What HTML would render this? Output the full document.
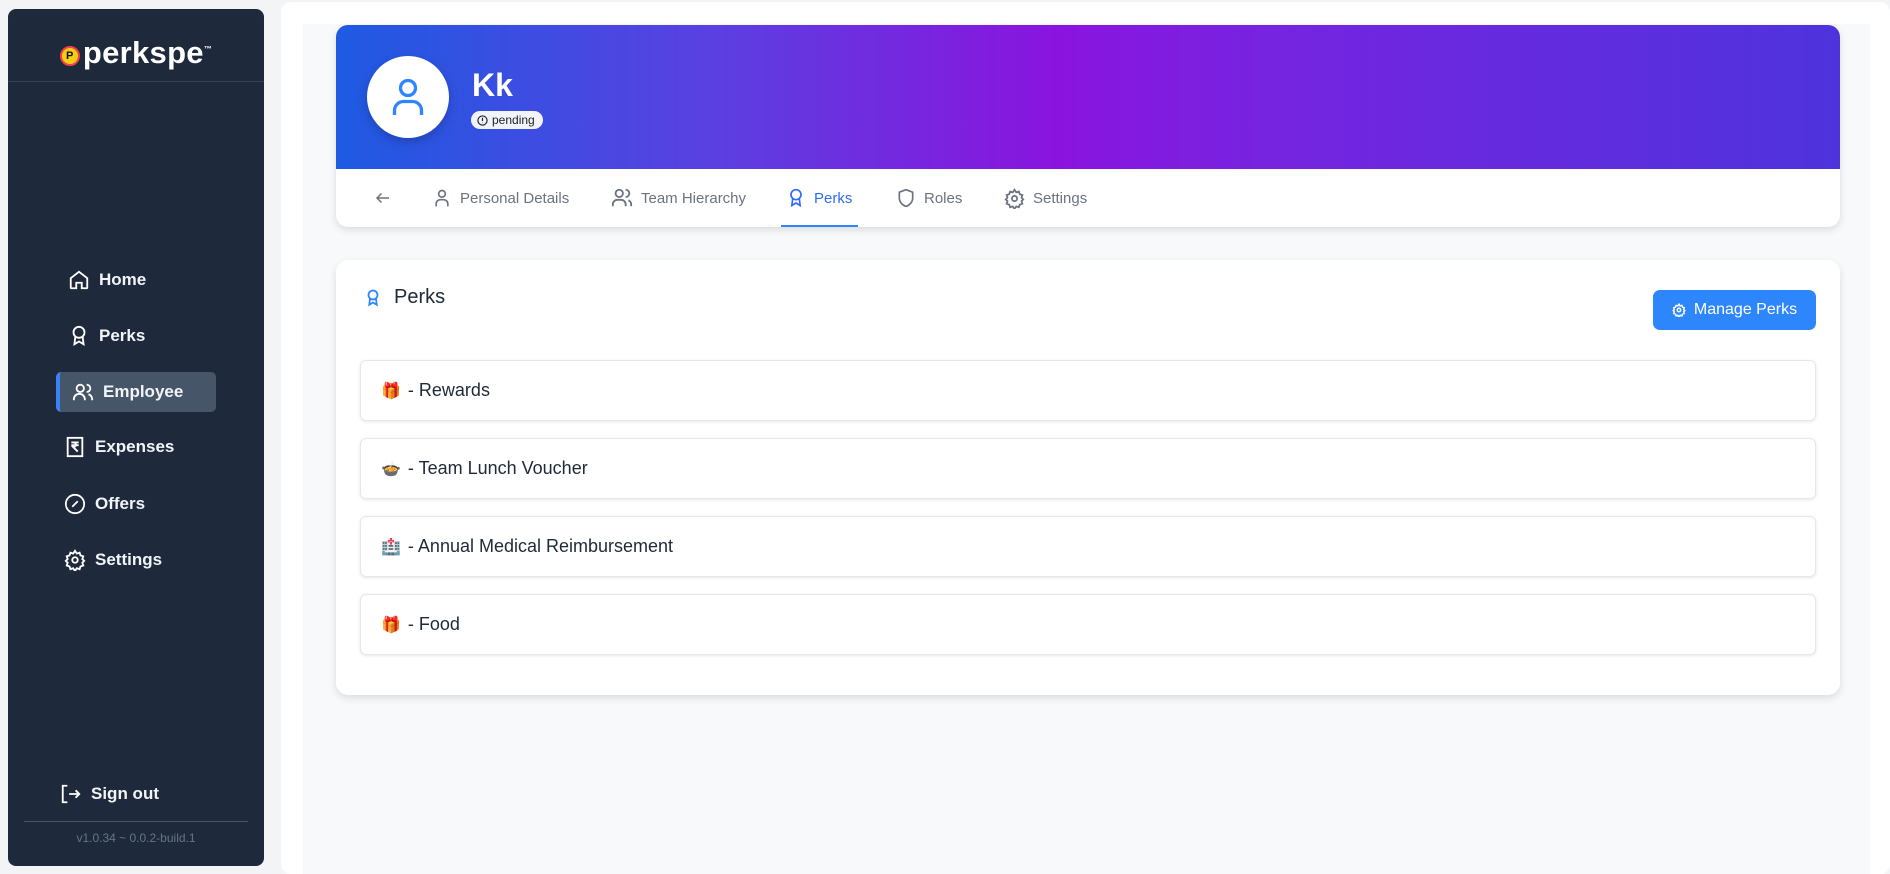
<!DOCTYPE html>
<html><head><meta charset="utf-8"><style>
*{box-sizing:border-box;margin:0;padding:0}
body{width:1890px;height:874px;background:#f3f4f6;font-family:"Liberation Sans",sans-serif;position:relative;overflow:hidden}
.side{position:absolute;left:8px;top:9px;width:256px;height:857px;background:#1e293b;border-radius:8px;color:#fff}
.logo{position:absolute;left:0;right:0;top:26px;text-align:center;font-size:31px;font-weight:bold;letter-spacing:0.3px}
.sdiv{position:absolute;left:0;right:0;top:72px;border-top:1px solid #334155}
.nav{position:absolute;left:56px;height:40px;display:flex;align-items:center;font-size:17px;font-weight:bold;color:#f1f5f9}
.nav svg{margin-right:9px}
.act{background:#475569;border-left:4px solid #3b82f6;border-radius:5px;width:160px;padding-left:12px}
.ver{position:absolute;left:0;right:0;top:822px;text-align:center;font-size:12px;color:#64748b}
.main{position:absolute;left:281px;top:2px;width:1609px;height:872px;background:#fff;border-radius:10px}
.inner{position:absolute;left:303px;top:24px;width:1567px;height:850px;background:#f8f9fb}
.card{position:absolute;left:336px;width:1504px;background:#fff;border-radius:12px;box-shadow:0 3px 8px rgba(0,0,0,.12);overflow:hidden}
.grad{height:144px;background:linear-gradient(90deg,#1e5ae2 0%,#5a40e0 25%,#8a14de 48%,#7624e0 62%,#4e33dc 100%);position:relative}
.av{position:absolute;left:31px;top:31px;width:82px;height:82px;border-radius:50%;background:#fff;box-shadow:0 4px 10px rgba(0,0,0,.2);display:flex;align-items:center;justify-content:center}
.name{position:absolute;left:136px;top:42px;color:#fff;font-size:32px;font-weight:bold}
.pill{position:absolute;left:135px;top:86px;height:18px;padding:0 8px 0 6px;background:#f1f5f9;border-radius:9px;font-size:12px;color:#222;display:flex;align-items:center;gap:4px}
.tabs{height:58px;position:relative;font-size:15px;color:#6b7280}
.tab{position:absolute;top:0;height:58px;display:flex;align-items:center;gap:8px}
.perks{top:260px;height:435px}
.row{position:absolute;left:24px;width:1456px;height:61px;border:1px solid #e5e7eb;border-radius:6px;box-shadow:0 1px 3px rgba(0,0,0,.1);display:flex;align-items:center;padding-left:20px;font-size:18px;color:#1f2937}
.row span.e{font-size:16px;margin-right:7px;font-family:"DejaVu Sans",sans-serif}
.btn{position:absolute;left:1317px;top:30px;width:163px;height:40px;background:#2e86fc;border-radius:7px;color:#fff;font-size:16px;display:flex;align-items:center;justify-content:center;gap:8px}
</style></head><body>
<div class="side">
 <div class="logo"><span style="display:inline-block;width:20px;height:20px;border-radius:50%;background:#facc15;border:2px solid #ef4444;color:#111;font-size:11px;line-height:16px;vertical-align:4px;margin-right:3px">P</span>perkspe<sup style="font-size:8px">™</sup></div>
 <div class="sdiv"></div>
 <div class="nav" style="top:251px;left:60px"><svg width="22" height="22" viewBox="0 0 24 24" fill="none" stroke="#fff" stroke-width="2"><path d="M3 10l9-7 9 7v10a1 1 0 01-1 1h-5v-6h-6v6H4a1 1 0 01-1-1z"/></svg>Home</div>
 <div class="nav" style="top:307px;left:60px"><svg width="22" height="22" viewBox="0 0 24 24" fill="none" stroke="#fff" stroke-width="2"><circle cx="12" cy="8" r="6"/><path d="M8 13l-1 8 5-3 5 3-1-8"/></svg>Perks</div>
 <div class="nav act" style="top:363px;left:48px"><svg width="22" height="22" viewBox="0 0 24 24" fill="none" stroke="#fff" stroke-width="2"><circle cx="9" cy="8" r="4"/><path d="M2 21v-1a6 6 0 0112 0v1M16 4a4 4 0 010 8M22 21v-1a6 6 0 00-4-5.5"/></svg>Employee</div>
 <div class="nav" style="top:418px;left:56px"><svg width="22" height="22" viewBox="0 0 24 24" fill="none" stroke="#fff" stroke-width="2"><rect x="4" y="2" width="16" height="20"/><path d="M8 7h8M8 10h8M10 7c4 0 4 5 0 5l5 5"/></svg>Expenses</div>
 <div class="nav" style="top:475px;left:56px"><svg width="22" height="22" viewBox="0 0 24 24" fill="none" stroke="#fff" stroke-width="2"><circle cx="12" cy="12" r="10"/><path d="M9 15l6-6M9 9h.01M15 15h.01"/></svg>Offers</div>
 <div class="nav" style="top:531px;left:56px"><svg width="22" height="22" viewBox="0 0 24 24" fill="none" stroke="#fff" stroke-width="2"><circle cx="12" cy="12" r="3"/><path d="M12 2l2 3 3-1 1 3 3 1-1 3 2 2-2 2 1 3-3 1-1 3-3-1-2 3-2-3-3 1-1-3-3-1 1-3-2-2 2-2-1-3 3-1 1-3 3 1z"/></svg>Settings</div>
 <div class="nav" style="top:765px;left:52px"><svg width="22" height="22" viewBox="0 0 24 24" fill="none" stroke="#fff" stroke-width="2"><path d="M8 3H3v18h5M10 12h11M17 8l4 4-4 4"/></svg>Sign out</div>
 <div style="position:absolute;left:16px;right:16px;top:812px;border-top:1px solid #475569"></div>
 <div class="ver">v1.0.34 ~ 0.0.2-build.1</div>
</div>
<div class="main"></div>
<div class="inner"></div>
<div class="card" style="top:25px;height:202px">
 <div class="grad">
  <div class="av"><svg width="36" height="40" viewBox="0 0 24 26" fill="none" stroke="#2e86fc" stroke-width="2.2"><circle cx="12" cy="7" r="5"/><path d="M3 25v-3a6 6 0 016-6h6a6 6 0 016 6v3"/></svg></div>
  <div class="name">Kk</div>
  <div class="pill"><svg width="11" height="11" viewBox="0 0 12 12" fill="none" stroke="#222" stroke-width="1.3"><circle cx="6" cy="6" r="5"/><path d="M6 3v3.5M6 8.3v.4"/></svg>pending</div>
 </div>
 <div class="tabs">
  <div class="tab" style="left:38px"><svg width="18" height="18" viewBox="0 0 24 24" fill="none" stroke="#6b7280" stroke-width="2"><path d="M20 12H4M10 6l-6 6 6 6"/></svg></div>
  <div class="tab" style="left:96px"><svg width="20" height="22" viewBox="0 0 24 24" fill="none" stroke="#6b7280" stroke-width="2"><circle cx="12" cy="7" r="4"/><path d="M5 22v-3a5 5 0 015-5h4a5 5 0 015 5v3"/></svg>Personal Details</div>
  <div class="tab" style="left:275px"><svg width="22" height="22" viewBox="0 0 24 24" fill="none" stroke="#6b7280" stroke-width="2"><circle cx="9" cy="7" r="4"/><path d="M2 21v-2a5 5 0 015-5h4a5 5 0 015 5v2M16 3a4 4 0 010 8M22 21v-2a5 5 0 00-3-4.5"/></svg>Team Hierarchy</div>
  <div class="tab" style="left:450px;color:#2e6cf6"><svg width="20" height="22" viewBox="0 0 24 24" fill="none" stroke="#2e6cf6" stroke-width="2"><circle cx="12" cy="8" r="6"/><path d="M8 13l-1 8 5-3 5 3-1-8"/></svg>Perks</div>
  <div style="position:absolute;left:445px;width:77px;top:56px;height:2px;background:#2e86fc"></div>
  <div class="tab" style="left:560px"><svg width="20" height="22" viewBox="0 0 24 24" fill="none" stroke="#6b7280" stroke-width="2"><path d="M12 2l8 3v7c0 5-4 9-8 10-4-1-8-5-8-10V5z"/></svg>Roles</div>
  <div class="tab" style="left:668px"><svg width="21" height="21" viewBox="0 0 24 24" fill="none" stroke="#6b7280" stroke-width="2"><circle cx="12" cy="12" r="3"/><path d="M12 2l2 3 3-1 1 3 3 1-1 3 2 2-2 2 1 3-3 1-1 3-3-1-2 3-2-3-3 1-1-3-3-1 1-3-2-2 2-2-1-3 3-1 1-3 3 1z"/></svg>Settings</div>
 </div>
</div>
<div class="card perks">
 <div style="position:absolute;left:28px;top:26px;display:flex;align-items:center;gap:12px;font-size:20px;color:#1f2937"><svg width="18" height="22" viewBox="0 0 24 24" fill="none" stroke="#2e86fc" stroke-width="2.4"><circle cx="12" cy="8" r="6"/><path d="M8 13l-1 8 5-3 5 3-1-8"/></svg>Perks</div>
 <div class="btn"><svg width="14" height="14" viewBox="0 0 24 24" fill="none" stroke="#fff" stroke-width="2.4"><circle cx="12" cy="12" r="3"/><path d="M12 2l2 3 3-1 1 3 3 1-1 3 2 2-2 2 1 3-3 1-1 3-3-1-2 3-2-3-3 1-1-3-3-1 1-3-2-2 2-2-1-3 3-1 1-3 3 1z"/></svg>Manage Perks</div>
 <div class="row" style="top:100px"><span class="e">🎁</span>- Rewards</div>
 <div class="row" style="top:178px"><span class="e">🍲</span>- Team Lunch Voucher</div>
 <div class="row" style="top:256px"><span class="e">🏥</span>- Annual Medical Reimbursement</div>
 <div class="row" style="top:334px"><span class="e">🎁</span>- Food</div>
</div>
</body></html>
